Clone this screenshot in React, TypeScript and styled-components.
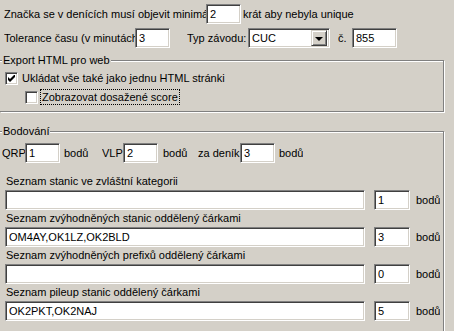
import React from "react";
import styled, { createGlobalStyle } from "styled-components";

const GlobalStyle = createGlobalStyle`
  html, body {
    margin: 0;
    background: #d4d0c8;
    overflow: hidden;
  }
  body {
    font-family: "Liberation Sans", Arial, sans-serif;
    font-size: 11px;
    color: #000;
  }
`;

const Form = styled.div`
  width: 454px;
  height: 331px;
  box-sizing: border-box;
  padding-top: 4px;
  overflow: hidden;
`;

const Row = styled.div<{ $top?: number; $left?: number; $h?: number }>`
  display: flex;
  align-items: center;
  height: ${(p) => p.$h ?? 20}px;
  margin-top: ${(p) => p.$top ?? 0}px;
  padding-left: ${(p) => p.$left ?? 0}px;
`;

const Label = styled.span<{ $w?: number; $ml?: number }>`
  flex: none;
  ${(p) => (p.$w ? `width: ${p.$w}px;` : "")}
  margin-left: ${(p) => p.$ml ?? 0}px;
  white-space: nowrap;
  overflow: hidden;
`;

const Field = styled.div<{ $w: number; $ml?: number }>`
  flex: none;
  box-sizing: border-box;
  width: ${(p) => p.$w}px;
  height: 20px;
  margin-left: ${(p) => p.$ml ?? 0}px;
  background: #fff;
  border: 1px solid;
  border-color: #808080 #fff #fff #808080;
  box-shadow: inset 1px 1px 0 #404040, inset -1px -1px 0 #d4d0c8;
  padding: 0 3px;
  line-height: 18px;
  white-space: nowrap;
  overflow: hidden;
`;

const Combo = styled(Field)`
  display: flex;
  align-items: center;
  justify-content: space-between;
  padding: 0 2px 0 3px;
`;

const DropButton = styled.div`
  box-sizing: border-box;
  width: 16px;
  height: 16px;
  background: #d4d0c8;
  border: 1px solid;
  border-color: #d4d0c8 #404040 #404040 #d4d0c8;
  box-shadow: inset 1px 1px 0 #fff, inset -1px -1px 0 #808080;
  display: flex;
  align-items: center;
  justify-content: center;
`;

const Arrow = styled.span`
  width: 0;
  height: 0;
  border-left: 4px solid transparent;
  border-right: 4px solid transparent;
  border-top: 4px solid #000;
  margin-top: 1px;
`;

const Group = styled.div<{ $top: number; $h: number; $pad: number }>`
  position: relative;
  box-sizing: border-box;
  width: 444px;
  height: ${(p) => p.$h}px;
  margin-top: ${(p) => p.$top}px;
  border: 1px solid #808080;
  border-left: none;
  box-shadow: inset 0 1px 0 #fff, 1px 1px 0 #fff;
  padding-top: ${(p) => p.$pad}px;
`;

const GroupTitle = styled.span`
  position: absolute;
  left: 2px;
  top: -8px;
  padding: 0 1px;
  line-height: 15px;
  background: #d4d0c8;
`;

const Box = styled.span`
  flex: none;
  box-sizing: border-box;
  width: 13px;
  height: 13px;
  margin-right: 4px;
  background: #fff;
  border: 1px solid;
  border-color: #808080 #fff #fff #808080;
  box-shadow: inset 1px 1px 0 #404040, inset -1px -1px 0 #d4d0c8;
  display: flex;
  align-items: center;
  justify-content: center;
`;

const Focus = styled.span`
  outline: 1px dotted #000;
  padding: 0 1px;
  margin-left: -1px;
  line-height: 14px;
`;

const ListBlock = styled.div<{ $top?: number }>`
  margin-top: ${(p) => p.$top ?? 0}px;
  padding-left: 5px;
`;

const ListLabel = styled.div`
  height: 17px;
  line-height: 17px;
  padding-left: 1px;
  white-space: nowrap;
`;

const Check = ({ checked }: { checked?: boolean }) => (
  <Box>
    {checked && (
      <svg width="7" height="7" viewBox="0 0 7 7">
        <path d="M0 2 L2 4 L6 0 L7 0 L7 2 L2 7 L0 5 Z" fill="#000" />
      </svg>
    )}
  </Box>
);

const lists = [
  { label: "Seznam stanic ve zvláštní kategorii", value: "", points: "1" },
  { label: "Seznam zvýhodněných stanic oddělený čárkami", value: "OM4AY,OK1LZ,OK2BLD", points: "3" },
  { label: "Seznam zvýhodněných prefixů oddělený čárkami", value: "", points: "0" },
  { label: "Seznam pileup stanic oddělený čárkami", value: "OK2PKT,OK2NAJ", points: "5" },
];

const App = () => {
  return (
    <Form>
      <GlobalStyle />
      <Row $left={4}>
        <Label $w={202}>Značka se v denících musí objevit minimálně</Label>
        <Field $w={35}>2</Field>
        <Label $ml={2}>krát aby nebyla unique</Label>
      </Row>
      <Row $left={4} $top={4}>
        <Label $w={131}>Tolerance času (v minutách)</Label>
        <Field $w={35}>3</Field>
        <Label $w={61} $ml={17}>Typ závodu:</Label>
        <Combo $w={82}>
          <span>CUC</span>
          <DropButton>
            <Arrow />
          </DropButton>
        </Combo>
        <Label $w={14} $ml={8}>č.</Label>
        <Field $w={45}>855</Field>
      </Row>

      <Group $top={12} $h={52} $pad={9}>
        <GroupTitle>Export HTML pro web</GroupTitle>
        <Row $left={5} $h={16}>
          <Check checked />
          <Label>Ukládat vše také jako jednu HTML stránki</Label>
        </Row>
        <Row $left={25} $h={16} $top={3}>
          <Check />
          <Focus>Zobrazovat dosažené score</Focus>
        </Row>
      </Group>

      <Group $top={19} $h={202} $pad={11}>
        <GroupTitle>Bodování</GroupTitle>
        <Row $left={2}>
          <Label $w={23}>QRP</Label>
          <Field $w={35}>1</Field>
          <Label $w={38} $ml={4}>bodů</Label>
          <Label $w={21}>VLP</Label>
          <Field $w={35}>2</Field>
          <Label $w={35} $ml={5}>bodů</Label>
          <Label $w={42}>za deník</Label>
          <Field $w={35}>3</Field>
          <Label $ml={4}>bodů</Label>
        </Row>
        {lists.map((l, i) => (
          <ListBlock key={l.label} $top={i === 0 ? 10 : 0}>
            <ListLabel>{l.label}</ListLabel>
            <Row>
              <Field $w={360}>{l.value}</Field>
              <Field $w={36} $ml={9}>{l.points}</Field>
              <Label $ml={6}>bodů</Label>
            </Row>
          </ListBlock>
        ))}
      </Group>
    </Form>
  );
};

export default App;
